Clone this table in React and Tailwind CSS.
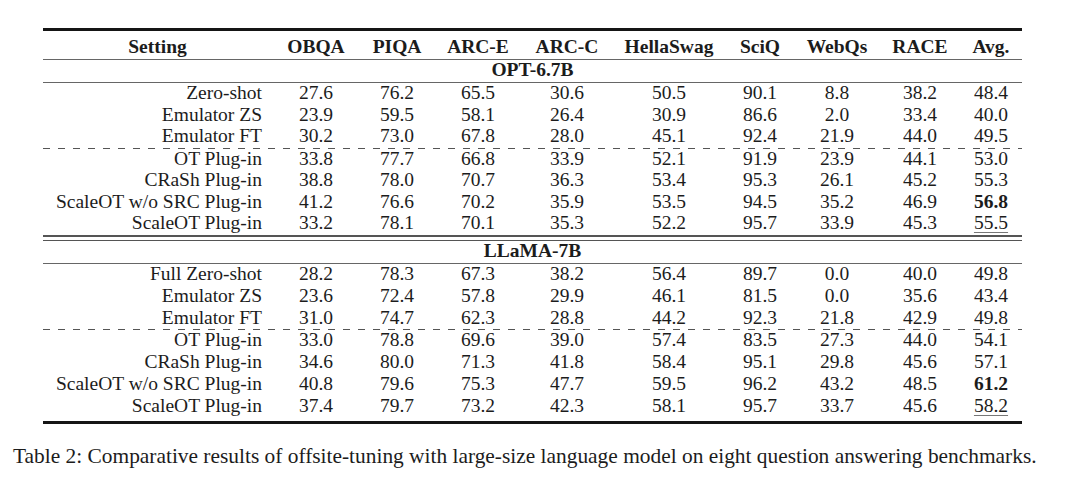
import React from 'react';

const COLS = 'grid grid-cols-[239px_68px_94px_68px_110px_94px_88px_66px_100px_52px]';

const opt = [
  ['Zero-shot', '27.6', '76.2', '65.5', '30.6', '50.5', '90.1', '8.8', '38.2', '48.4'],
  ['Emulator ZS', '23.9', '59.5', '58.1', '26.4', '30.9', '86.6', '2.0', '33.4', '40.0'],
  ['Emulator FT', '30.2', '73.0', '67.8', '28.0', '45.1', '92.4', '21.9', '44.0', '49.5'],
];
const optPlug = [
  ['OT Plug-in', '33.8', '77.7', '66.8', '33.9', '52.1', '91.9', '23.9', '44.1', '53.0'],
  ['CRaSh Plug-in', '38.8', '78.0', '70.7', '36.3', '53.4', '95.3', '26.1', '45.2', '55.3'],
  ['ScaleOT w/o SRC Plug-in', '41.2', '76.6', '70.2', '35.9', '53.5', '94.5', '35.2', '46.9', '56.8', 'bold'],
  ['ScaleOT Plug-in', '33.2', '78.1', '70.1', '35.3', '52.2', '95.7', '33.9', '45.3', '55.5', 'under'],
];
const llama = [
  ['Full Zero-shot', '28.2', '78.3', '67.3', '38.2', '56.4', '89.7', '0.0', '40.0', '49.8'],
  ['Emulator ZS', '23.6', '72.4', '57.8', '29.9', '46.1', '81.5', '0.0', '35.6', '43.4'],
  ['Emulator FT', '31.0', '74.7', '62.3', '28.8', '44.2', '92.3', '21.8', '42.9', '49.8'],
];
const llamaPlug = [
  ['OT Plug-in', '33.0', '78.8', '69.6', '39.0', '57.4', '83.5', '27.3', '44.0', '54.1'],
  ['CRaSh Plug-in', '34.6', '80.0', '71.3', '41.8', '58.4', '95.1', '29.8', '45.6', '57.1'],
  ['ScaleOT w/o SRC Plug-in', '40.8', '79.6', '75.3', '47.7', '59.5', '96.2', '43.2', '48.5', '61.2', 'bold'],
  ['ScaleOT Plug-in', '37.4', '79.7', '73.2', '42.3', '58.1', '95.7', '33.7', '45.6', '58.2', 'under'],
];

const headers = ['OBQA', 'PIQA', 'ARC-E', 'ARC-C', 'HellaSwag', 'SciQ', 'WebQs', 'RACE', 'Avg.'];

const Row = ({ cells, h }) => {
  const mark = cells[10];
  return (
    <div className={`${COLS} ${h} items-start leading-[19px]`}>
      <div className="text-right pr-[20px] whitespace-nowrap">{cells[0]}</div>
      {cells.slice(1, 9).map((v, i) => (
        <div key={i} className="text-center">{v}</div>
      ))}
      <div className="text-center pr-[10px]">
        {mark === 'bold' ? (
          <span className="font-bold">{cells[9]}</span>
        ) : mark === 'under' ? (
          <span className="underline decoration-[#777] decoration-1 underline-offset-[3px]">{cells[9]}</span>
        ) : (
          cells[9]
        )}
      </div>
    </div>
  );
};

const Dashed = () => (
  <div className="h-px bg-[repeating-linear-gradient(to_right,#555_0px,#555_7px,transparent_7px,transparent_15px)]" />
);

const Group = ({ title }) => (
  <div className="h-[22px] leading-[19px] text-center font-bold">{title}</div>
);

export default function App() {
  return (
    <div className="w-[1080px] h-[483px] bg-white text-[#1c1c1c] font-['Liberation_Serif',serif] text-[19.5px] overflow-hidden">
      <div className="ml-[43px] w-[979px] pt-[28px]">
        <div className="h-[3px] bg-[#151515]" />
        <div className={`${COLS} h-[28px] pt-[6px] leading-[19px] font-bold`}>
          <div className="text-center pl-[10px] pr-[20px]">Setting</div>
          {headers.slice(0, 8).map((t) => (
            <div key={t} className="text-center">{t}</div>
          ))}
          <div className="text-center pr-[10px]">Avg.</div>
        </div>
        <div className="h-px bg-[#666]" />
        <Group title="OPT-6.7B" />
        <div className="h-px bg-[#666]" />
        {opt.map((r) => <Row key={r[0]} cells={r} h="h-[21.5px]" />)}
        <Dashed />
        {optPlug.map((r) => <Row key={r[0]} cells={r} h="h-[21.5px]" />)}
        <div className="mt-[0.5px] h-[1.5px] bg-[#555]" />
        <div className="mt-[3.5px] h-px bg-[#555]" />
        <Group title="LLaMA-7B" />
        <div className="h-px bg-[#666]" />
        {llama.map((r) => <Row key={r[0]} cells={r} h="h-[21.75px]" />)}
        <Dashed />
        {llamaPlug.map((r) => <Row key={r[0]} cells={r} h="h-[21.75px]" />)}
        <div className="mt-[4px] h-[3px] bg-[#151515]" />
      </div>
      <p className="mt-[20px] pl-[13px] text-[21.4px] leading-[24px] whitespace-nowrap">
        Table 2: Comparative results of offsite-tuning with large-size language model on eight question answering benchmarks.
      </p>
    </div>
  );
}
